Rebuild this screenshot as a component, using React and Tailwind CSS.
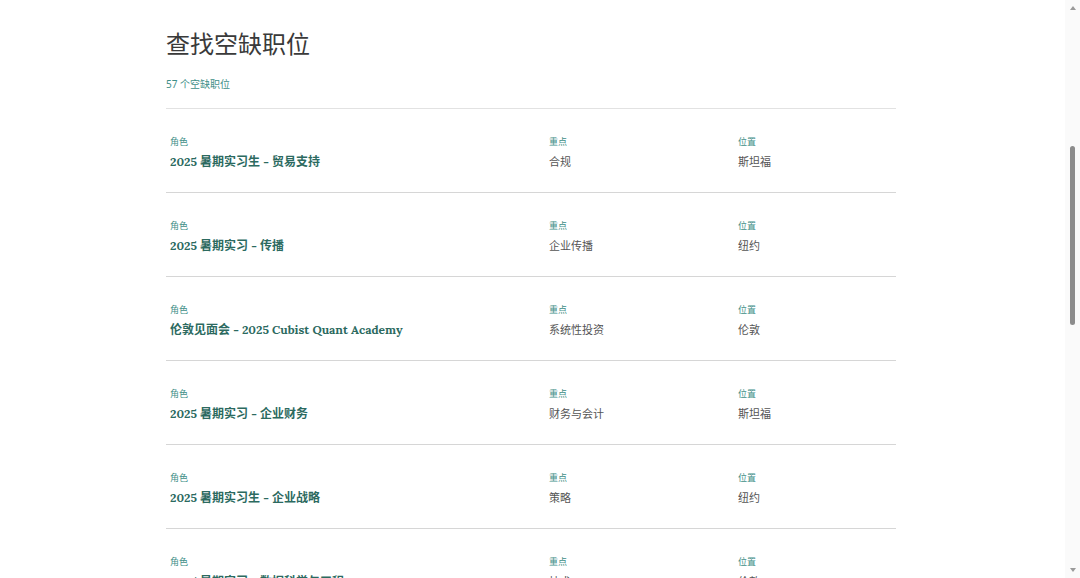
const jobs = [
  { role: '2025 暑期实习生 - 贸易支持', focus: '合规', location: '斯坦福' },
  { role: '2025 暑期实习 - 传播', focus: '企业传播', location: '纽约' },
  { role: '伦敦见面会 - 2025 Cubist Quant Academy', focus: '系统性投资', location: '伦敦' },
  { role: '2025 暑期实习 - 企业财务', focus: '财务与会计', location: '斯坦福' },
  { role: '2025 暑期实习生 - 企业战略', focus: '策略', location: '纽约' },
  { role: '2025 暑期实习 - 数据科学与工程', focus: '技术', location: '伦敦' },
];

const JobRow = ({ job }) => (
  <div className="grid grid-cols-[383px_189px_1fr] h-[84px] shrink-0 border-b border-[#d6d6d6] pt-[26px]">
    <div className="pl-1">
      <div className="text-[9px] leading-[14px] text-[#3f8f88]">角色</div>
      <div className="mt-[4px] text-[12px] leading-[18px] font-bold text-[#2c6a5f] font-[Lora,'Liberation_Serif','Noto_Sans_CJK_SC',serif]">
        {job.role}
      </div>
    </div>
    <div>
      <div className="text-[9px] leading-[14px] text-[#3f8f88]">重点</div>
      <div className="mt-[4px] text-[11px] leading-[18px] text-[#555]">{job.focus}</div>
    </div>
    <div>
      <div className="text-[9px] leading-[14px] text-[#3f8f88]">位置</div>
      <div className="mt-[4px] text-[11px] leading-[18px] text-[#555]">{job.location}</div>
    </div>
  </div>
);

const Scrollbar = () => (
  <div className="w-[15px] h-full flex flex-col items-center bg-[#fafafa]">
    <div className="h-[12px] flex items-end justify-center pb-[2px]">
      <div className="w-0 h-0 border-x-[3.5px] border-x-transparent border-b-[4px] border-b-[#9a9a9a]" />
    </div>
    <div className="h-[134px]" />
    <div className="w-[5px] h-[179px] rounded-full bg-[#8c8c8c]" />
    <div className="flex-1" />
    <div className="h-[12px] flex items-start justify-center pt-[2px]">
      <div className="w-0 h-0 border-x-[3.5px] border-x-transparent border-t-[4px] border-t-[#9a9a9a]" />
    </div>
  </div>
);

const App = () => {
  return (
    <div className="h-screen flex overflow-hidden bg-white font-['Noto_Sans','Noto_Sans_CJK_SC',sans-serif]">
      <div className="flex-1 overflow-hidden pr-[3px]">
        <div className="max-w-[730px] mx-auto pt-[28px] flex flex-col">
          <h1 className="text-[24px] leading-[32px] text-[#3a3a3a]">查找空缺职位</h1>
          <p className="mt-[17px] text-[10px] leading-[14px] text-[#3f8f88]">57 个空缺职位</p>
          <div className="mt-[17px] border-t border-[#e2e2e2] flex flex-col">
            {jobs.map((job, i) => (
              <JobRow key={i} job={job} />
            ))}
          </div>
        </div>
      </div>
      <Scrollbar />
    </div>
  );
};

export default App;
